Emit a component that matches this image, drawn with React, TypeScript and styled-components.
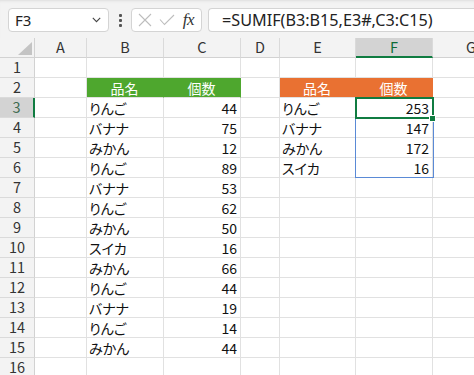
import React from "react";
import styled, { createGlobalStyle } from "styled-components";

const GlobalStyle = createGlobalStyle`
  html, body { margin: 0; padding: 0; background: #f3f3f3; overflow: hidden; }
  body { font-family: "Noto Sans CJK JP", "Noto Sans", sans-serif; }
`;

const COLS = [35, 52, 77, 77, 39, 76, 77, 77];
const LETTERS = ["A", "B", "C", "D", "E", "F", "G"];

const Page = styled.div`
  width: 474px;
  height: 375px;
  overflow: hidden;
  background: #f3f3f3;
`;

const FormulaBar = styled.div`
  height: 38px;
  box-sizing: border-box;
  display: flex;
  align-items: flex-start;
  padding: 7px 0 0 8px;
  border-top: 1px solid #e4e4e4;
  box-shadow: inset 0 2px 2px -1px #e9e9e9;
`;

const Box = styled.div<{ $w?: number }>`
  box-sizing: border-box;
  height: 24px;
  ${(p) => (p.$w ? `width: ${p.$w}px; flex: none;` : "flex: 1;")}
  background: #fff;
  border: 1px solid #d4d4d4;
  border-radius: 4px;
  display: flex;
  align-items: center;
`;

const NameBox = styled(Box)`
  padding: 0 7px 0 6px;
  justify-content: space-between;
`;

const NameText = styled.span`
  font-family: "Noto Sans", sans-serif;
  font-size: 15px;
  color: #222;
`;

const Grip = styled.div`
  width: 22px;
  height: 24px;
  flex: none;
  display: flex;
  flex-direction: column;
  align-items: center;
  justify-content: center;
  gap: 2px;
`;

const Dot = styled.span`
  width: 3px;
  height: 3px;
  border-radius: 1px;
  background: #555;
`;

const FxBox = styled(Box)`
  margin-right: 6px;
  padding: 0 6px 0 6px;
  justify-content: space-between;
`;

const FxText = styled.span`
  font-family: "Liberation Serif", serif;
  font-style: italic;
  font-size: 17px;
  color: #333;
  letter-spacing: -0.5px;
  padding-right: 1px;
`;

const FormulaBox = styled(Box)`
  margin-right: -20px;
  padding-left: 13px;
  border-right: none;
`;

const FormulaText = styled.span`
  font-family: "Noto Sans", sans-serif;
  font-size: 16.2px;
  color: #222;
  white-space: nowrap;
`;

const Sheet = styled.div`
  position: relative;
  display: grid;
  grid-template-columns: ${COLS.map((c) => c + "px").join(" ")};
  grid-auto-rows: 20px;
  background: #fff;
`;

const Corner = styled.div`
  box-sizing: border-box;
  background: #f3f3f3;
  border-right: 1px solid #d2d2d2;
  border-bottom: 1px solid #d2d2d2;
  display: flex;
  align-items: flex-end;
  justify-content: flex-end;
  padding: 0 2px 2px 0;
`;

const ColHeader = styled.div<{ $sel?: boolean }>`
  box-sizing: border-box;
  background: ${(p) => (p.$sel ? "#d3d3d3" : "#f3f3f3")};
  border-right: 1px solid #dadada;
  border-bottom: ${(p) => (p.$sel ? "2px solid #107c41" : "1px solid #d2d2d2")};
  color: ${(p) => (p.$sel ? "#0e6b37" : "#333")};
  display: flex;
  align-items: center;
  justify-content: center;
  font-size: 14.5px;
  line-height: 1;
  padding-top: ${(p) => (p.$sel ? "1px" : "0")};
`;

const RowHeader = styled.div<{ $sel?: boolean }>`
  box-sizing: border-box;
  background: ${(p) => (p.$sel ? "#d3d3d3" : "#f3f3f3")};
  border-right: ${(p) => (p.$sel ? "2px solid #107c41" : "1px solid #d2d2d2")};
  border-bottom: 1px solid #dadada;
  color: ${(p) => (p.$sel ? "#3d6b50" : "#333")};
  display: flex;
  align-items: center;
  justify-content: center;
  font-size: 14.5px;
  line-height: 1;
`;

const Cell = styled.div<{ $align?: "left" | "right" | "center"; $fill?: string }>`
  box-sizing: border-box;
  background: ${(p) => p.$fill ?? "#fff"};
  border-right: 1px solid ${(p) => p.$fill ?? "#e1e1e1"};
  border-bottom: 1px solid #e1e1e1;
  color: ${(p) => (p.$fill ? "#fff" : "#111")};
  display: flex;
  align-items: center;
  justify-content: ${(p) =>
    p.$align === "right" ? "flex-end" : p.$align === "center" ? "center" : "flex-start"};
  padding: 0 3px 0 2px;
  font-size: 14px;
  line-height: 1;
  font-feature-settings: "palt";
  white-space: nowrap;
  overflow: hidden;
`;

const SpillRange = styled.div`
  position: absolute;
  left: 355px;
  top: 59px;
  width: 79px;
  height: 81px;
  box-sizing: border-box;
  border: 1px solid #5a8ad6;
  pointer-events: none;
`;

const ActiveCell = styled.div`
  position: absolute;
  left: 355px;
  top: 59px;
  width: 79px;
  height: 22px;
  box-sizing: border-box;
  border: 2px solid #107c41;
  pointer-events: none;
`;

const FillHandle = styled.div`
  position: absolute;
  left: 429px;
  top: 77px;
  width: 7px;
  height: 7px;
  box-sizing: border-box;
  background: #107c41;
  border: 1px solid #fff;
`;

const GREEN = "#4ea72e";
const ORANGE = "#e97132";

type CellDef = { text?: string | number; align?: "left" | "right" | "center"; fill?: string };

const names = ["りんご", "バナナ", "みかん", "りんご", "バナナ", "りんご", "みかん", "スイカ", "みかん", "りんご", "バナナ", "りんご", "みかん"];
const counts = [44, 75, 12, 89, 53, 62, 50, 16, 66, 44, 19, 14, 44];
const summary: [string, number][] = [
  ["りんご", 253],
  ["バナナ", 147],
  ["みかん", 172],
  ["スイカ", 16],
];

function buildRows(): CellDef[][] {
  const rows: CellDef[][] = [];
  for (let r = 1; r <= 16; r++) {
    const row: CellDef[] = Array.from({ length: 7 }, () => ({}));
    if (r === 2) {
      row[1] = { text: "品名", align: "center", fill: GREEN };
      row[2] = { text: "個数", align: "center", fill: GREEN };
      row[4] = { text: "品名", align: "center", fill: ORANGE };
      row[5] = { text: "個数", align: "center", fill: ORANGE };
    }
    if (r >= 3 && r <= 15) {
      row[1] = { text: names[r - 3] };
      row[2] = { text: counts[r - 3], align: "right" };
    }
    if (r >= 3 && r <= 6) {
      row[4] = { text: summary[r - 3][0] };
      row[5] = { text: summary[r - 3][1], align: "right" };
    }
    rows.push(row);
  }
  return rows;
}

const rows = buildRows();

const Chevron = () => (
  <svg width="9" height="6" viewBox="0 0 9 6">
    <path d="M0.8 0.8 L4.5 4.6 L8.2 0.8" fill="none" stroke="#444" strokeWidth="1.1" />
  </svg>
);

const CrossIcon = () => (
  <svg width="14" height="14" viewBox="0 0 14 14">
    <path d="M1 1 L13 13 M13 1 L1 13" stroke="#bdbdbd" strokeWidth="1.1" />
  </svg>
);

const CheckIcon = () => (
  <svg width="16" height="12" viewBox="0 0 16 12">
    <path d="M1 5.5 L5.5 10.5 L15 1" fill="none" stroke="#bdbdbd" strokeWidth="1.1" />
  </svg>
);

const CornerTriangle = () => (
  <svg width="14" height="13" viewBox="0 0 14 13">
    <polygon points="14,0 14,13 0,13" fill="#c4c4c4" />
  </svg>
);

export default function App() {
  return (
    <Page>
      <GlobalStyle />
      <FormulaBar>
        <NameBox $w={101}>
          <NameText>F3</NameText>
          <Chevron />
        </NameBox>
        <Grip>
          <Dot />
          <Dot />
          <Dot />
        </Grip>
        <FxBox $w={71}>
          <CrossIcon />
          <CheckIcon />
          <FxText>fx</FxText>
        </FxBox>
        <FormulaBox>
          <FormulaText>=SUMIF(B3:B15,E3#,C3:C15)</FormulaText>
        </FormulaBox>
      </FormulaBar>
      <Sheet>
        <Corner>
          <CornerTriangle />
        </Corner>
        {LETTERS.map((l) => (
          <ColHeader key={l} $sel={l === "F"}>
            {l}
          </ColHeader>
        ))}
        {rows.map((row, i) => (
          <React.Fragment key={i}>
            <RowHeader $sel={i + 1 === 3}>{i + 1}</RowHeader>
            {row.map((c, j) => (
              <Cell key={j} $align={c.align} $fill={c.fill}>
                {c.text}
              </Cell>
            ))}
          </React.Fragment>
        ))}
        <SpillRange />
        <ActiveCell />
        <FillHandle />
      </Sheet>
    </Page>
  );
}
